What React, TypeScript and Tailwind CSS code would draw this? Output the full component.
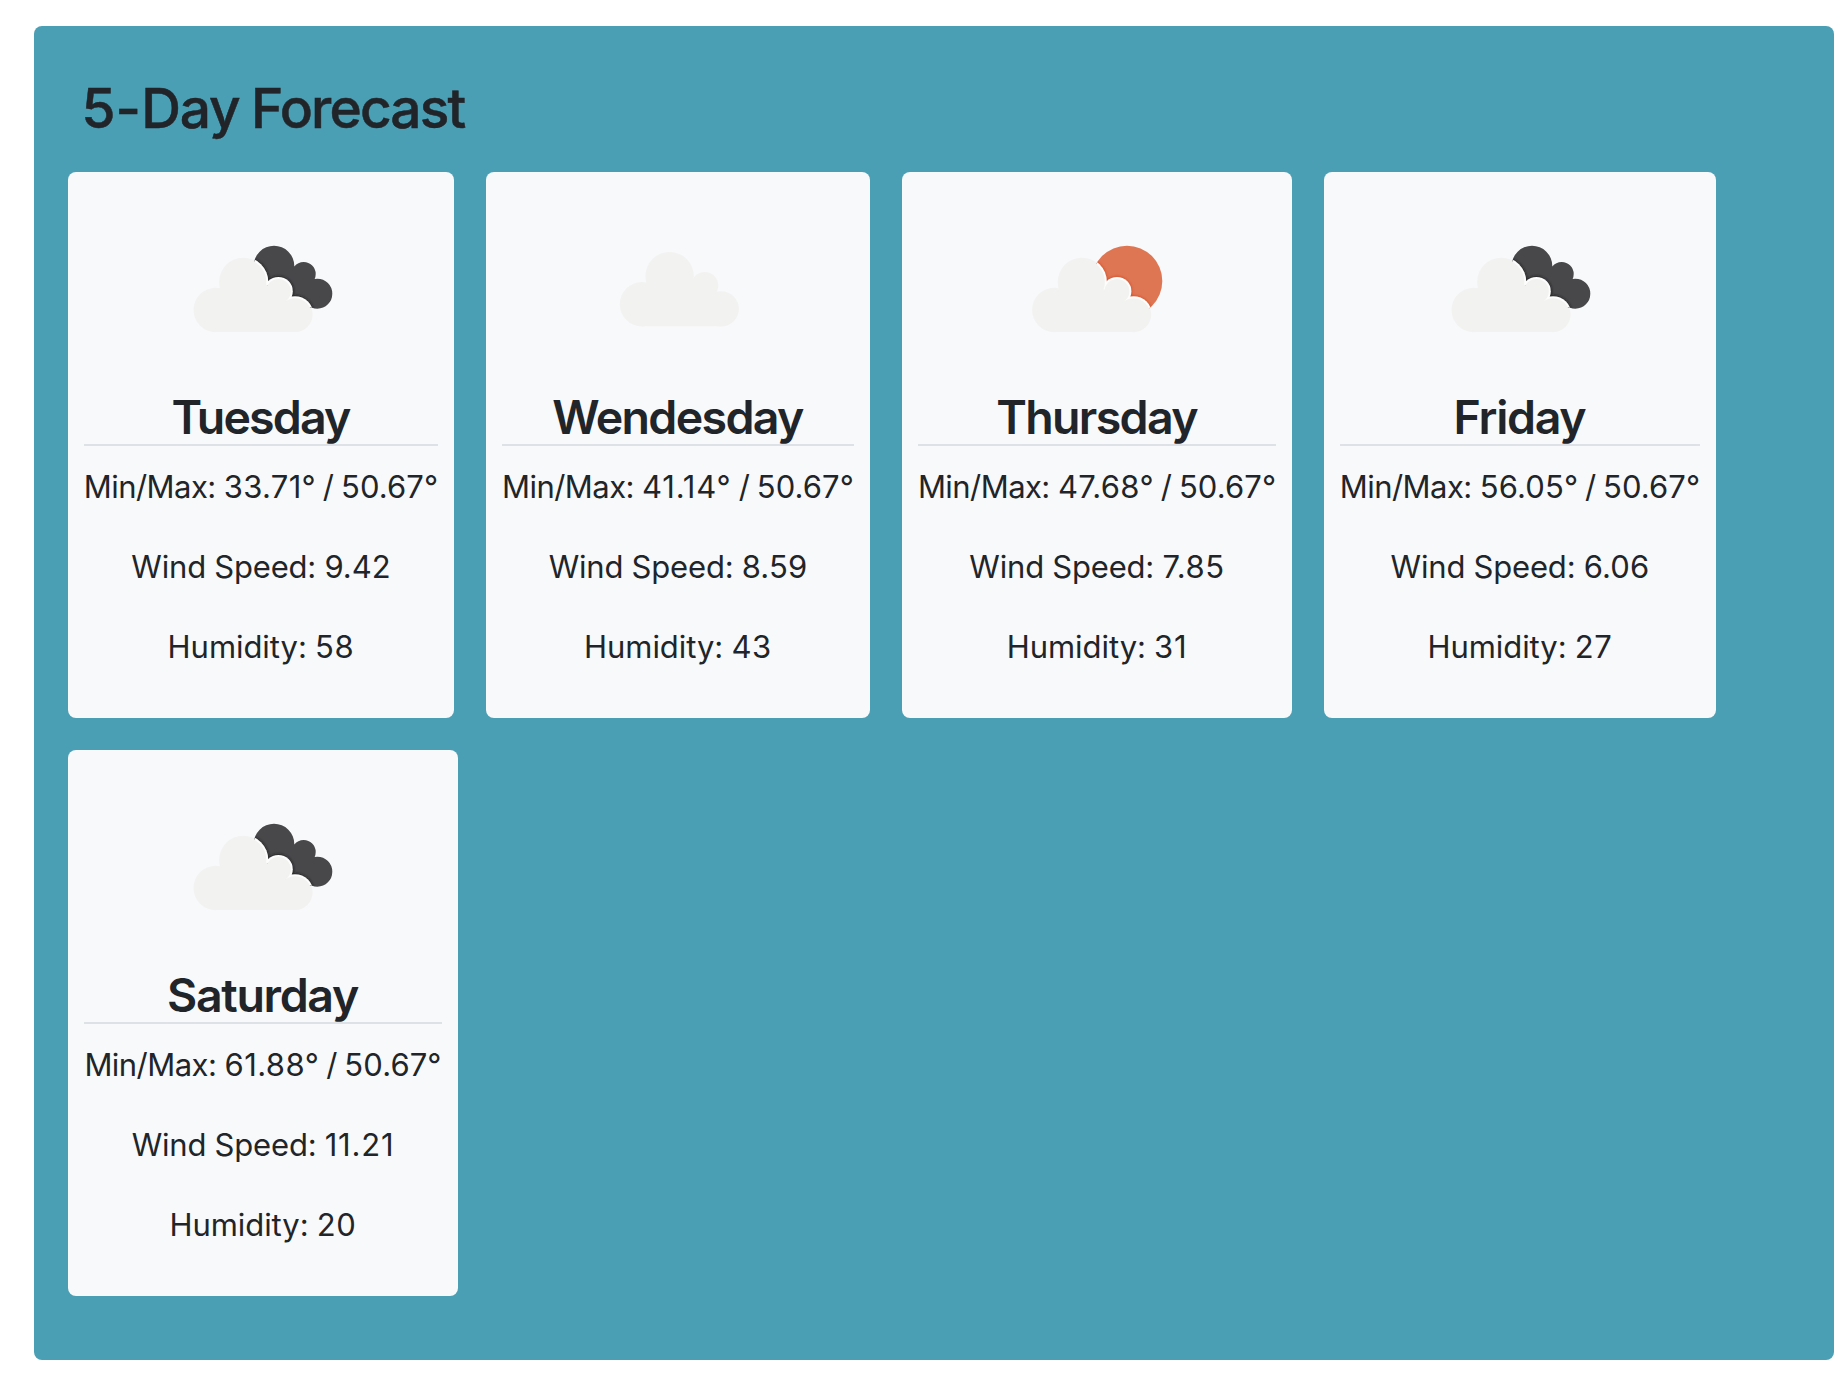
import { useId } from "react";

type Sky = "broken" | "scattered" | "few";
type Circle = [number, number, number];

const CLOUD: Circle[] = [
  [54.7, 122, 22.2],
  [82.3, 93.9, 24.2],
  [117.4, 103.3, 13.6],
  [134, 126.6, 17.6],
];

function CloudShape({ grow = 0 }: { grow?: number }) {
  return (
    <>
      {CLOUD.map(([x, y, r]) => (
        <circle key={x} cx={x} cy={y} r={r + grow} />
      ))}
      <path d="M54.7 101.5 H116 L134 126.6 V144 H54.7 Z" />
    </>
  );
}

const SHIFT: Record<Sky, string> = {
  broken: "translate(0 0)",
  scattered: "translate(9.3 -5.7)",
  few: "translate(2.6 0)",
};

function WeatherIcon({ sky }: { sky: Sky }) {
  const id = useId();
  const shift = SHIFT[sky];
  return (
    <svg viewBox="0 0 200 200" className="size-[200px] shrink-0 blur-[0.5px]">
      <defs>
        <clipPath id={id}>
          {sky === "broken" ? (
            <>
              <circle cx="113" cy="78" r="20.3" />
              <circle cx="142.7" cy="86" r="12" />
              <circle cx="156.3" cy="105.7" r="15" />
              <path d="M108 78 L140 80 L158 100 L152 120 L110 110 Z" />
            </>
          ) : (
            <circle cx="130" cy="93" r="35.3" />
          )}
        </clipPath>
        <filter id={id + "s"}>
          <feGaussianBlur stdDeviation="1.4" />
        </filter>
      </defs>
      <g transform={shift} fill="#f2f2f0">
        <CloudShape />
      </g>
      {sky !== "scattered" && (
        <>
          <g clipPath={`url(#${id})`}>
            <rect width="200" height="200" fill={sky === "broken" ? "#48484a" : "#de7654"} />
            <g transform={shift} fill={sky === "broken" ? "#1c1c1e" : "#d24a20"} filter={`url(#${id}s)`}>
              <CloudShape grow={1.2} />
            </g>
            <g transform={shift} fill="#fdfdfd">
              <CloudShape grow={0.8} />
            </g>
          </g>
          <g transform={shift} fill="#f2f2f0">
            <CloudShape grow={-1.2} />
          </g>
        </>
      )}
    </svg>
  );
}

type Day = {
  day: string;
  sky: Sky;
  card: string;
  dayTracking: string;
  iconOffset: string;
  min: string;
  minTracking: string;
  wind: string;
  windTracking: string;
  humidity: number;
};

const DAYS: Day[] = [
  { day: "Tuesday", sky: "broken", card: "w-[386px]", dayTracking: "tracking-[-1.85px]", iconOffset: "mr-0", min: "33.71", minTracking: "tracking-[0.3px]", wind: "9.42", windTracking: "tracking-[0px]", humidity: 58 },
  { day: "Wendesday", sky: "scattered", card: "w-[384px]", dayTracking: "tracking-[-1.65px]", iconOffset: "mr-0", min: "41.14", minTracking: "tracking-[0.8px]", wind: "8.59", windTracking: "tracking-[0.15px]", humidity: 43 },
  { day: "Thursday", sky: "few", card: "w-[390px]", dayTracking: "tracking-[-1.65px]", iconOffset: "mr-0", min: "47.68", minTracking: "tracking-[0.35px]", wind: "7.85", windTracking: "tracking-[0.6px]", humidity: 31 },
  { day: "Friday", sky: "broken", card: "w-[392px]", dayTracking: "tracking-[-1.3px]", iconOffset: "mr-[2px]", min: "56.05", minTracking: "tracking-[0.12px]", wind: "6.06", windTracking: "tracking-[0.15px]", humidity: 27 },
  { day: "Saturday", sky: "broken", card: "w-[390px]", dayTracking: "tracking-[-1.35px]", iconOffset: "mr-[4px]", min: "61.88", minTracking: "tracking-[0.45px]", wind: "11.21", windTracking: "tracking-[0.8px]", humidity: 20 },
];

function ForecastCard({ d }: { d: Day }) {
  return (
    <article className={`flex h-[546px] flex-col items-center rounded-lg bg-[#f8f9fa] p-4 ${d.card}`}>
      <div className={d.iconOffset}>
        <WeatherIcon sky={d.sky} />
      </div>
      <h3 className={`h-[58px] w-full border-b-2 border-[#dee2e6] pr-px text-center text-[46.5px] leading-[58px] font-semibold ${d.dayTracking}`}>
        {d.day}
      </h3>
      <div className="mt-[17px] flex flex-col items-center gap-8 text-[31px] leading-[48px] whitespace-nowrap">
        <p>
          <span className="tracking-[-0.55px]">Min/Max: </span>
          <span className={`[word-spacing:-2.2px] ${d.minTracking}`}>{d.min}° </span>
          <span className="tracking-[0.1px] [word-spacing:-2px]">/ 50.67°</span>
        </p>
        <p>
          <span className="tracking-[-0.17px] [word-spacing:-0.3px]">Wind Speed: </span>
          <span className={d.windTracking}>{d.wind}</span>
        </p>
        <p>
          <span className="tracking-[-0.05px] [word-spacing:-0.5px]">Humidity: </span>
          <span className="tracking-[0.7px]">{d.humidity}</span>
        </p>
      </div>
    </article>
  );
}

export default function App() {
  return (
    <div className="h-[1374px] w-[1840px] bg-white pt-[26px] pl-[34px] font-['Inter',sans-serif] text-[#212529]">
      <section className="h-[1334px] w-[1800px] rounded-lg bg-[#4b9fb5] pt-[49px] pl-[34px]">
        <h2 className="mb-[31px] pl-[13.5px] text-[55px] leading-[66px] font-medium [-webkit-text-stroke:0.5px_#212529]">
          <span className="tracking-[0.1px]">5-</span>
          <span className="tracking-[-1.1px] [word-spacing:-2px]">Day </span>
          <span className="tracking-[-1.85px]">Forecast</span>
        </h2>
        <div className="flex flex-wrap gap-8">
          {DAYS.map((d) => (
            <ForecastCard key={d.day} d={d} />
          ))}
        </div>
      </section>
    </div>
  );
}
